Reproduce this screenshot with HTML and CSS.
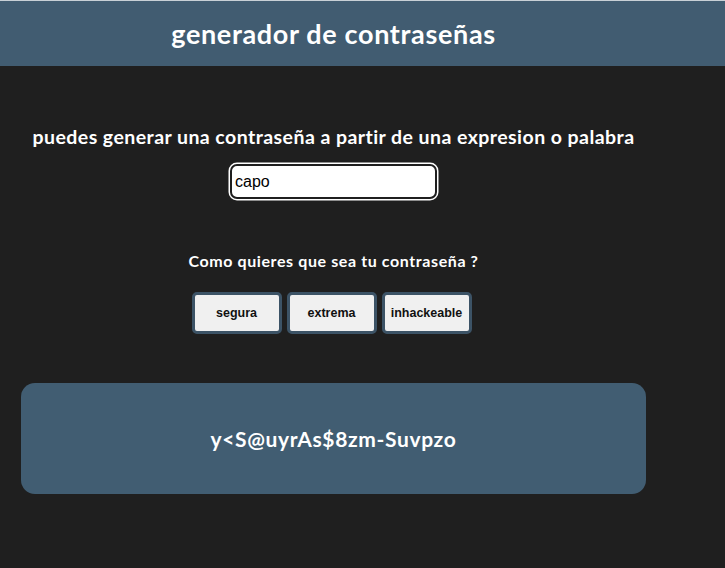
FILE: index.html
```html
<!DOCTYPE html>
<html lang="es">
<head>
<meta charset="utf-8">
<title>generador de contraseñas</title>
<link rel="stylesheet" href="styles.css">
</head>
<body>
<header class="top">
  <div class="top-inner">
    <h1 class="title">generador de contraseñas</h1>
  </div>
</header>
<main class="main">
  <p class="lead">puedes generar una contraseña a partir de una expresion o palabra</p>
  <input class="word" type="text" value="capo">
  <p class="question">Como quieres que sea tu contraseña ?</p>
  <div class="choices">
    <button class="choice">segura</button>
    <button class="choice">extrema</button>
    <button class="choice">inhackeable</button>
  </div>
  <div class="result">
    <span class="result-text">y&lt;S@uyrAs$8zm-Suvpzo</span>
  </div>
</main>
</body>
</html>
```
FILE: styles.css
```css
* { box-sizing: border-box; }
body {
  margin: 0;
  background: #1f1f1f;
  font-family: Lato, "Open Sans", sans-serif;
  color: #fff;
}
.top {
  background: #415c71;
  border-top: 1px solid #c8d0d6;
  height: 66px;
}
.top-inner {
  width: 667px;
  height: 100%;
  display: flex;
  align-items: center;
  justify-content: center;
}
.title {
  margin: 0;
  font-size: 27px;
  letter-spacing: 0.65px;
  font-weight: 700;
  color: #fff;
}
.main {
  width: 667px;
  display: flex;
  flex-direction: column;
  align-items: center;
  padding-top: 60px;
}
.lead {
  margin: 0;
  font-size: 19.5px;
  letter-spacing: 0.44px;
  line-height: 22px;
  font-weight: 700;
  white-space: nowrap;
}
.word {
  margin-top: 16px;
  width: 207px;
  height: 35px;
  background: #fff;
  border: 2px solid #1f1f1f;
  border-radius: 7px;
  box-shadow: 0 0 0 1.5px #fff;
  font-family: "Liberation Sans", Arial, sans-serif;
  font-size: 16px;
  color: #000;
  padding: 0 3px;
  outline: none;
}
.question {
  margin: 52px 0 0;
  font-size: 16px;
  letter-spacing: 0.6px;
  line-height: 20px;
  font-weight: 700;
}
.choices {
  margin-top: 21px;
  margin-right: 4px;
  display: flex;
  gap: 5px;
}
.choice {
  width: 90px;
  height: 42px;
  background: #f0f0f0;
  border: 3px solid #3c5366;
  border-radius: 5px;
  font-family: "Liberation Sans", Arial, sans-serif;
  font-size: 12.5px;
  font-weight: 700;
  color: #111;
  padding: 0;
}
.result {
  margin-top: 49px;
  width: 625px;
  height: 111px;
  background: #415d72;
  border-radius: 14px;
  display: flex;
  align-items: center;
  justify-content: center;
}
.result-text {
  font-size: 21px;
  letter-spacing: 0.65px;
  font-weight: 700;
}
```
